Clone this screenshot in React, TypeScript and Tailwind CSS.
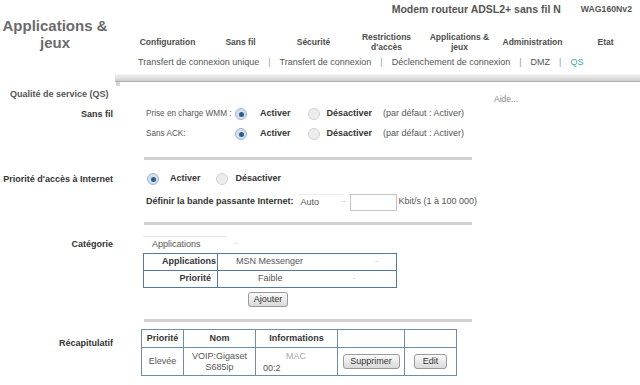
import React from 'react';

function Radio({ on }: { on?: boolean }) {
  return on ? (
    <span className="flex h-[12px] w-[12px] shrink-0 items-center justify-center rounded-full border border-[#9fb6cc] bg-[#d3e0ec]">
      <span className="h-[5px] w-[5px] rounded-full bg-[#2d5d8c]" />
    </span>
  ) : (
    <span className="block h-[12px] w-[12px] shrink-0 rounded-full border border-[#d2d2d2] bg-[#ededed]" />
  );
}

function Btn({ children, w }: { children: React.ReactNode; w: string }) {
  return (
    <span className={`inline-flex h-[15px] items-center justify-center rounded-[3px] border border-[#9a9a9a] bg-gradient-to-b from-[#fbfbfb] to-[#d9d9d9] text-[9px] text-[#333] ${w}`}>
      {children}
    </span>
  );
}

function Divider() {
  return <div className="ml-[144px] h-[3px] w-[328px] bg-[#d0d0d0]" />;
}

const nav = [
  ['Configuration'],
  ['Sans fil'],
  ['Sécurité'],
  ['Restrictions', "d'accès"],
  ['Applications &', 'jeux'],
  ['Administration'],
  ['Etat'],
];

const subnav = ['Transfert de connexion unique', 'Transfert de connexion', 'Déclenchement de connexion', 'DMZ'];

export default function App() {
  return (
    <div className="relative h-[385px] w-[640px] overflow-hidden bg-white font-['Liberation_Sans',Arial,sans-serif] text-[9px] text-[#555]">
      {/* header */}
      <div className="flex">
        <div className="w-[110px] shrink-0 pt-[17px] text-center text-[15px] font-bold leading-[17px] text-[#6b6b6b]">
          Applications &amp;
          <br />
          jeux
        </div>
        <div className="flex-1">
          <div className="flex h-[19px] items-center justify-end pr-[10px] font-bold">
            <span className="text-[10.5px] text-[#555]">Modem routeur ADSL2+ sans fil N</span>
            <span className="ml-[20px] text-[8.7px] text-[#555]">WAG160Nv2</span>
          </div>
          <div className="ml-[21px] mt-[13px] flex h-[20px] items-center text-[8.5px] font-bold leading-[10px] text-[#4d4d4d]">
            {nav.map((n) => (
              <div key={n[0]} className="w-[73px] shrink-0 text-center">
                {n.map((l) => (
                  <div key={l}>{l}</div>
                ))}
              </div>
            ))}
          </div>
          <div className="ml-[28px] mt-[5px] flex h-[12px] items-center whitespace-nowrap text-[#555]">
            {subnav.map((s) => (
              <React.Fragment key={s}>
                <span>{s}</span>
                <span className="mx-[9px] text-[#999]">|</span>
              </React.Fragment>
            ))}
            <span className="text-[#3aa9a9]">QS</span>
          </div>
        </div>
      </div>

      {/* grey bar */}
      <div className="ml-[115px] mt-[5px] h-[8px] border-b border-[#b5b5b5] bg-gradient-to-b from-[#f5f5f5] to-[#cdcdcd]" />
      <div className="ml-[116px] h-[4px] w-[4px] bg-[#d5d5d5]" />

      <div className="flex">
        <div className="w-[494px] shrink-0">
          <div className="mt-[1px] h-[14px] pl-[10px] font-bold leading-[14px] text-[#555]">Qualité de service (QS)</div>

          {/* Sans fil */}
          <div className="mt-[3px] flex">
            <div className="w-[113px] shrink-0 text-right font-bold leading-[20px] text-[#333]">Sans fil</div>
            <div className="ml-[33px]">
              {['Prise en charge WMM :', 'Sans ACK:'].map((l) => (
                <div key={l} className="flex h-[20px] items-center whitespace-nowrap">
                  <span className="w-[89px] shrink-0 text-[8.2px]">{l}</span>
                  <Radio on />
                  <span className="ml-[13px] font-bold text-[#333]">Activer</span>
                  <span className="ml-[17px]"><Radio /></span>
                  <span className="ml-[7px] font-bold text-[#333]">Désactiver</span>
                  <span className="ml-[11px]">(par défaut : Activer)</span>
                </div>
              ))}
            </div>
          </div>

          <div className="mt-[13px]"><Divider /></div>

          {/* Priorité */}
          <div className="mt-[9px] flex">
            <div className="w-[113px] shrink-0 whitespace-nowrap text-right font-bold leading-[20px] text-[#333]">Priorité d'accès à Internet</div>
            <div>
              <div className="ml-[34px] flex h-[20px] items-center whitespace-nowrap">
                <Radio on />
                <span className="ml-[11px] font-bold text-[#333]">Activer</span>
                <span className="ml-[15px]"><Radio /></span>
                <span className="ml-[8px] font-bold text-[#333]">Désactiver</span>
              </div>
              <div className="ml-[33px] mt-[3px] flex h-[20px] items-center whitespace-nowrap">
                <span className="font-bold text-[#333]">Définir la bande passante Internet:</span>
                <span className="ml-[5px] flex h-[16px] w-[44px] items-center border-t border-[#ececec] pl-[2px]">Auto</span>
                <span className="text-[#bbb]">-</span>
                <span className="ml-[4px] h-[17px] w-[47px] border border-[#c4c4c4]" />
                <span className="ml-[2px]">Kbit/s (1 à 100 000)</span>
              </div>
            </div>
          </div>

          <div className="mt-[10px]"><Divider /></div>

          {/* Catégorie */}
          <div className="mt-[11px] flex">
            <div className="w-[113px] shrink-0 text-right font-bold leading-[16px] text-[#333]">Catégorie</div>
            <div className="ml-[30px]">
              <div className="flex h-[16px] items-center">
                <span className="flex h-[16px] w-[84px] items-center border-t border-[#e6e6e6] pl-[9px]">Applications</span>
                <span className="ml-[8px] text-[#ccc]">-</span>
              </div>
              <table className="mt-[1px] w-[254px] border-collapse border border-[#56799b]">
                <tbody>
                  <tr className="h-[17px]">
                    <td className="w-[74px] border border-[#56799b] pr-[1px] text-right font-bold text-[#333]">Applications</td>
                    <td className="border border-[#56799b] pl-[18px]">
                      <div className="flex items-center">
                        <span>MSN Messenger</span>
                        <span className="ml-[72px] text-[#ccc]">-</span>
                      </div>
                    </td>
                  </tr>
                  <tr className="h-[17px]">
                    <td className="border border-[#56799b] pr-[6px] text-right font-bold text-[#333]">Priorité</td>
                    <td className="border border-[#56799b] pl-[40px]">
                      <div className="flex items-center">
                        <span>Faible</span>
                        <span className="ml-[70px] text-[#ccc]">-</span>
                      </div>
                    </td>
                  </tr>
                </tbody>
              </table>
              <div className="ml-[105px] mt-[4px]">
                <Btn w="w-[40px]">Ajouter</Btn>
              </div>
            </div>
          </div>

          <div className="mt-[12px]"><Divider /></div>

          {/* Récapitulatif */}
          <div className="mt-[7px] flex">
            <div className="w-[113px] shrink-0 pt-[4px] text-right font-bold leading-[20px] text-[#333]">Récapitulatif</div>
            <table className="ml-[28px] w-[316px] border-collapse border border-[#6f8cab] text-center">
              <tbody>
                <tr className="h-[18px] font-bold text-[#333]">
                  <td className="w-[42px] border border-[#6f8cab]">Priorité</td>
                  <td className="w-[72px] border border-[#6f8cab]">Nom</td>
                  <td className="w-[82px] border border-[#6f8cab]">Informations</td>
                  <td className="w-[67px] border border-[#6f8cab]" />
                  <td className="border border-[#6f8cab]" />
                </tr>
                <tr className="h-[28px]">
                  <td className="border border-[#6f8cab]">Elevée</td>
                  <td className="border border-[#6f8cab] leading-[11px]">
                    VOIP:Gigaset
                    <br />
                    S685ip
                  </td>
                  <td className="border border-[#6f8cab] text-left leading-[12px]">
                    <div className="pl-[30px] text-[#aaa]">MAC</div>
                    <div className="pl-[7px]">00:2</div>
                  </td>
                  <td className="border border-[#6f8cab]">
                    <Btn w="w-[57px]">Supprimer</Btn>
                  </td>
                  <td className="border border-[#6f8cab]">
                    <Btn w="w-[33px]">Edit</Btn>
                  </td>
                </tr>
              </tbody>
            </table>
          </div>
        </div>
        <div className="pt-[7px] text-[8.5px] text-[#888]">Aide...</div>
      </div>
    </div>
  );
}
